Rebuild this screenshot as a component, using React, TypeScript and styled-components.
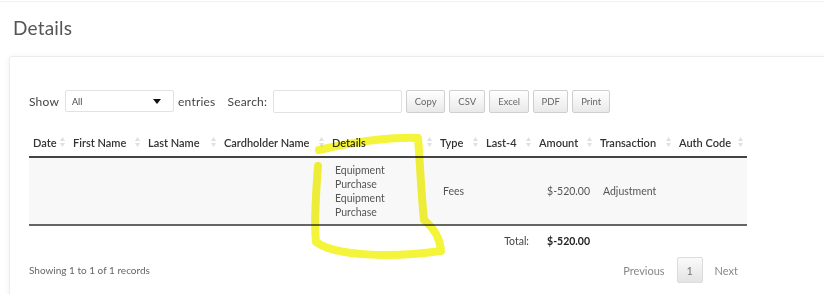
import React from "react";
import styled, { createGlobalStyle } from "styled-components";

const Global = createGlobalStyle`
  html, body { margin: 0; padding: 0; background: #fff; }
  body { font-family: "Lato", "Noto Sans", sans-serif; color: #555; }
  * { box-sizing: border-box; }
`;

const Page = styled.div`
  position: relative;
  width: 824px;
  height: 294px;
  overflow: hidden;
  border-top: 1px solid #f0f0f0;
  margin-top: 1px;
`;

const Title = styled.h1`
  margin: 0;
  padding: 14px 0 0 13px;
  font-size: 19px;
  font-weight: 400;
  color: #555;
  height: 54px;
  letter-spacing: 0.2px;
`;

const Card = styled.div`
  margin-left: 9px;
  width: 840px;
  height: 260px;
  border: 1px solid #ececec;
  border-radius: 3px;
  box-shadow: 0 1px 6px rgba(0, 0, 0, 0.06);
  padding: 32px 0 0 19px;
`;

const Toolbar = styled.div`
  display: flex;
  align-items: center;
  height: 24px;
  font-size: 12px;
  color: #444;
`;

const Label = styled.span<{ $ml?: number }>`
  margin-left: ${(p) => p.$ml ?? 0}px;
  margin-right: 6px;
  letter-spacing: 0.2px;
`;

const Select = styled.div`
  width: 109px;
  height: 22px;
  border: 1px solid #e2e2e2;
  border-radius: 2px;
  display: flex;
  align-items: center;
  justify-content: space-between;
  padding: 0 12px 0 6px;
  font-size: 9px;
  color: #444;
  margin-right: 4px;
`;

const Caret = styled.span`
  width: 0;
  height: 0;
  border-left: 4px solid transparent;
  border-right: 4px solid transparent;
  border-top: 5px solid #111;
`;

const SearchInput = styled.div`
  width: 129px;
  height: 23px;
  border: 1px solid #e2e2e2;
  border-radius: 2px;
`;

const ExportButton = styled.div<{ $w: number }>`
  width: ${(p) => p.$w}px;
  height: 23px;
  margin-left: 4px;
  border: 1px solid #cfcfcf;
  border-radius: 2px;
  background: linear-gradient(#ffffff, #e9e9e9);
  display: flex;
  align-items: center;
  justify-content: center;
  font-size: 9.5px;
  color: #666;
  &:first-of-type { margin-left: 0; }
`;

const Table = styled.table`
  margin-top: 15px;
  border-collapse: collapse;
  table-layout: fixed;
  width: 718px;
`;

const Th = styled.th<{ $w: number }>`
  width: ${(p) => p.$w}px;
  height: 29px;
  padding: 0 4px;
  text-align: left;
  font-weight: 600;
  color: #333;
  border-bottom: 2px solid #444;
  white-space: nowrap;
  position: relative;
  font-size: 11px;
`;

const SortIcon = styled.svg`
  position: absolute;
  right: 4px;
  top: 50%;
  margin-top: -5px;
`;

const BodyRow = styled.tr`
  background: #f8f8f8;
`;

const Td = styled.td<{ $right?: boolean }>`
  height: 68px;
  padding: 0 6px 0 7px;
  font-size: 10.5px;
  color: #555;
  text-align: ${(p) => (p.$right ? "right" : "left")};
  border-bottom: 2px solid #666;
  vertical-align: middle;
`;

const DetailText = styled.div`
  width: 60px;
  line-height: 14px;
`;

const FootTd = styled.td<{ $bold?: boolean }>`
  height: 30px;
  padding: 0 6px 0 7px;
  text-align: right;
  font-size: 10.5px;
  font-weight: ${(p) => (p.$bold ? 700 : 400)};
  color: ${(p) => (p.$bold ? "#222" : "#444")};
`;

const Footer = styled.div`
  width: 718px;
  display: flex;
  justify-content: space-between;
  align-items: center;
  margin-top: 2px;
  font-size: 10px;
  color: #666;
`;

const Pager = styled.div`
  display: flex;
  align-items: center;
  gap: 12px;
  margin-right: 9px;
  font-size: 11px;
`;

const PageLink = styled.span`
  color: #888;
`;

const PageCurrent = styled.span`
  width: 26px;
  height: 26px;
  display: flex;
  align-items: center;
  justify-content: center;
  border: 1px solid #dcdcdc;
  border-radius: 2px;
  background: linear-gradient(#fafafa, #e4e4e4);
  color: #777;
`;

const Highlight = styled.svg`
  position: absolute;
  left: 0;
  top: 0;
  mix-blend-mode: multiply;
  pointer-events: none;
`;

const Sort = () => (
  <SortIcon width="5" height="10" viewBox="0 0 5 10">
    <path d="M2.5 0 L5 4 L0 4 Z" fill="#e0e0e0" />
    <path d="M2.5 10 L5 6 L0 6 Z" fill="#e0e0e0" />
  </SortIcon>
);

const columns: [string, number][] = [
  ["Date", 40],
  ["First Name", 75],
  ["Last Name", 76],
  ["Cardholder Name", 108],
  ["Details", 108],
  ["Type", 46],
  ["Last-4", 53],
  ["Amount", 61],
  ["Transaction", 79],
  ["Auth Code", 72],
];

export default function App() {
  return (
    <>
      <Global />
      <Page>
        <Title>Details</Title>
        <Card>
          <Toolbar>
            <Label>Show</Label>
            <Select>
              <span>All</span>
              <Caret />
            </Select>
            <Label>entries</Label>
            <Label $ml={6}>Search:</Label>
            <SearchInput />
            <ExportButton $w={39}>Copy</ExportButton>
            <ExportButton $w={36}>CSV</ExportButton>
            <ExportButton $w={40}>Excel</ExportButton>
            <ExportButton $w={35}>PDF</ExportButton>
            <ExportButton $w={38}>Print</ExportButton>
          </Toolbar>
          <Table>
            <thead>
              <tr>
                {columns.map(([name, w]) => (
                  <Th key={name} $w={w}>
                    {name}
                    <Sort />
                  </Th>
                ))}
              </tr>
            </thead>
            <tbody>
              <BodyRow>
                <Td />
                <Td />
                <Td />
                <Td />
                <Td>
                  <DetailText>Equipment Purchase Equipment Purchase</DetailText>
                </Td>
                <Td>Fees</Td>
                <Td />
                <Td $right>$-520.00</Td>
                <Td>Adjustment</Td>
                <Td />
              </BodyRow>
            </tbody>
            <tfoot>
              <tr>
                <FootTd colSpan={7}>Total:</FootTd>
                <FootTd $bold>$-520.00</FootTd>
                <FootTd colSpan={2} />
              </tr>
            </tfoot>
          </Table>
          <Footer>
            <span>Showing 1 to 1 of 1 records</span>
            <Pager>
              <PageLink>Previous</PageLink>
              <PageCurrent>1</PageCurrent>
              <PageLink>Next</PageLink>
            </Pager>
          </Footer>
        </Card>
        <Highlight width="824" height="294" viewBox="0 0 824 294">
          <path
            d="M318 164 C316 190 314 222 316 240 C335 254 390 256 441 249 C440 236 434 226 424 218 C421 190 420 160 418 136 C390 135 350 141 319 148"
            fill="none"
            stroke="#f4f43a"
            strokeWidth="8"
            strokeLinecap="round"
            strokeLinejoin="round"
          />
        </Highlight>
      </Page>
    </>
  );
}
